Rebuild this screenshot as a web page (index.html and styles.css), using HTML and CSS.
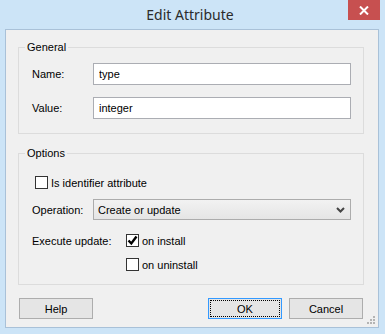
FILE: index.html
```html
<!DOCTYPE html>
<html lang="en">
<head>
    <meta charset="UTF-8">
    <title>Edit Attribute</title>
    <link rel="stylesheet" href="styles.css">
</head>
<body>
<div class="window">
    <div class="titlebar">
        <span class="title">Edit Attribute</span>
        <button class="close">
            <svg width="10" height="9" viewBox="0 0 10 9"><path d="M1 0.5 L9 8.5 M9 0.5 L1 8.5" stroke="#fff" stroke-width="2"/></svg>
        </button>
    </div>

    <div class="client">
        <div class="group general">
            <span class="legend">General</span>
            <div class="row">
                <label class="lbl">Name:</label>
                <input class="text" type="text" value="type">
            </div>
            <div class="row">
                <label class="lbl">Value:</label>
                <input class="text" type="text" value="integer">
            </div>
        </div>

        <div class="group options">
            <span class="legend">Options</span>
            <div class="check-row ident">
                <span class="box"></span>
                <span>Is identifier attribute</span>
            </div>
            <div class="row op-row">
                <label class="lbl">Operation:</label>
                <div class="select">
                    <span>Create or update</span>
                    <svg width="9" height="6" viewBox="0 0 9 6"><path d="M1 1 L4.5 4.5 L8 1" stroke="#444" stroke-width="2" fill="none"/></svg>
                </div>
            </div>
            <div class="check-row exec">
                <label class="lbl wide">Execute update:</label>
                <span class="box">
                    <svg width="11" height="11" viewBox="0 0 11 11"><path d="M1.5 5.5 L4.3 8.5 L9.5 1.5" stroke="#000" stroke-width="2.4" fill="none"/></svg>
                </span>
                <span>on install</span>
            </div>
            <div class="check-row uninst">
                <span class="box"></span>
                <span>on uninstall</span>
            </div>
        </div>

        <div class="footer">
            <button class="btn">Help</button>
            <div class="btn-group">
                <button class="btn ok">OK</button>
                <button class="btn">Cancel</button>
            </div>
        </div>

        <svg class="grip" width="9" height="9" viewBox="0 0 9 9">
            <rect x="6" y="0" width="2" height="2" fill="#b4b4b4"/>
            <rect x="3" y="3" width="2" height="2" fill="#b4b4b4"/>
            <rect x="6" y="3" width="2" height="2" fill="#b4b4b4"/>
            <rect x="0" y="6" width="2" height="2" fill="#b4b4b4"/>
            <rect x="3" y="6" width="2" height="2" fill="#b4b4b4"/>
            <rect x="6" y="6" width="2" height="2" fill="#b4b4b4"/>
        </svg>
    </div>
</div>
</body>
</html>
```

FILE: styles.css
```css
body {
    margin: 0;
    font-family: "Liberation Sans", Arial, sans-serif;
    font-size: 11px;
    color: #000;
}
.window {
    width: 385px;
    height: 334px;
    box-sizing: border-box;
    padding: 0 6px 6px 5px;
    background-color: #cce4f7;
}
.titlebar {
    height: 29px;
    display: grid;
    grid-template-columns: 1fr auto 1fr;
    margin: 0 -6px 0 -5px;
    padding-right: 5px;
}
.title {
    grid-column: 2;
    font-family: "Noto Sans", sans-serif;
    font-size: 14px;
    color: #2b2b2b;
    line-height: 29px;
}
.close {
    grid-column: 3;
    justify-self: end;
    align-self: start;
    width: 32px;
    height: 20px;
    padding: 0;
    border: none;
    background-color: #c75050;
    display: flex;
    align-items: center;
    justify-content: center;
}
.client {
    position: relative;
    height: 299px;
    box-sizing: border-box;
    border: 1px solid #a9c1d8;
    background-color: #f0f0f0;
    padding: 17px 14px 0 12px;
}
.group {
    position: relative;
    box-sizing: border-box;
    border: 1px solid #dcdcdc;
}
.legend {
    position: absolute;
    top: -8px;
    left: 6px;
    padding: 0 2px;
    line-height: 14px;
    background-color: #f0f0f0;
}
.general {
    height: 87px;
    padding: 15px 0 0 13px;
}
.row {
    display: flex;
    align-items: center;
    height: 22px;
}
.general .row + .row {
    margin-top: 12px;
}
.lbl {
    width: 61px;
}
.lbl.wide {
    width: 94px;
}
.text {
    box-sizing: border-box;
    width: 258px;
    height: 22px;
    margin: 0;
    border: 1px solid #abadb3;
    padding: 0 5px;
    font-family: inherit;
    font-size: 11px;
    color: #000;
    background-color: #fff;
}
.options {
    height: 132px;
    margin-top: 19px;
    padding: 19px 0 0 13px;
}
.check-row {
    display: flex;
    align-items: center;
    height: 19px;
}
.box {
    box-sizing: border-box;
    width: 13px;
    height: 13px;
    border: 1px solid #333;
    background-color: #fff;
    margin-right: 3px;
    display: flex;
    align-items: center;
    justify-content: center;
}
.ident {
    padding-left: 3px;
}
.op-row {
    height: 21px;
    margin-top: 7px;
}
.select {
    box-sizing: border-box;
    width: 258px;
    height: 21px;
    border: 1px solid #acacac;
    background: linear-gradient(#f2f2f2, #e5e5e5);
    display: flex;
    align-items: center;
    justify-content: space-between;
    padding: 0 5px 0 4px;
}
.exec {
    margin-top: 11px;
}
.uninst {
    margin-top: 5px;
    padding-left: 94px;
}
.footer {
    display: flex;
    justify-content: space-between;
    margin-top: 13px;
    padding: 0 1px;
}
.btn-group {
    display: flex;
    gap: 7px;
}
.btn {
    width: 74px;
    height: 21px;
    margin: 0;
    padding: 0;
    border: 1px solid #adadad;
    background-color: #e5e5e5;
    font-family: inherit;
    font-size: 11px;
    color: #000;
}
.ok {
    border-color: #3399ff;
    outline: 1px dotted #000;
    outline-offset: -3px;
}
.grip {
    position: absolute;
    right: 2px;
    bottom: 2px;
}
```
